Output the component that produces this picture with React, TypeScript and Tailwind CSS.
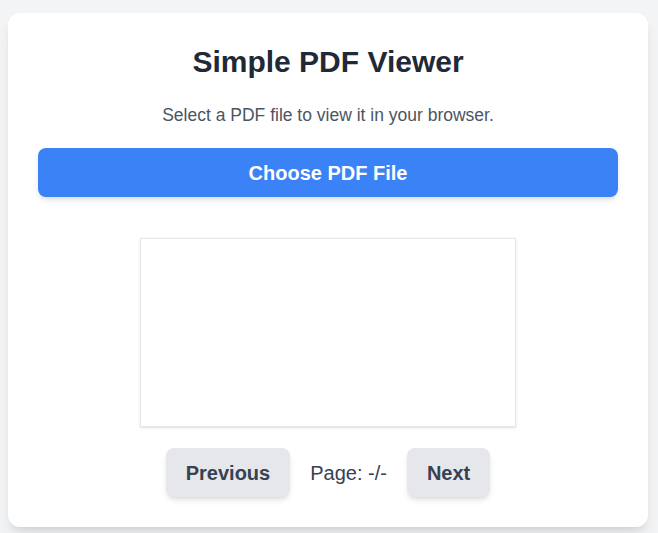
import React from "react";

export default function App() {
  return (
    <div className="min-h-screen bg-[#f3f4f6] pl-[8px] pr-[10px] pt-[13px] pb-[6px]" style={{ fontFamily: '"Liberation Sans", Arial, sans-serif' }}>
      <div className="bg-white rounded-xl shadow-lg px-[30px] pt-[30px] pb-[30px] flex flex-col items-center">
        <h1 className="text-[30px] leading-[38px] font-bold text-[#1f2937]">Simple PDF Viewer</h1>
        <p className="mt-[21px] text-[17.5px] leading-[26px] text-[#4b5563]">Select a PDF file to view it in your browser.</p>
        <button className="mt-[20px] w-full h-[49px] rounded-lg bg-[#3b82f6] text-white text-[20px] font-bold shadow-md">Choose PDF File</button>
        <div className="mt-[41px] w-[376px] h-[189px] border border-[#e5e7eb] shadow-sm bg-white"></div>
        <div className="mt-[21px] flex items-center gap-[20px]">
          <button className="h-[49px] px-[20px] rounded-lg bg-[#e5e7eb] text-[#374151] text-[20px] font-bold shadow-md">Previous</button>
          <span className="text-[20px] text-[#374151]">Page: -/-</span>
          <button className="h-[49px] px-[20px] rounded-lg bg-[#e5e7eb] text-[#374151] text-[20px] font-bold shadow-md">Next</button>
        </div>
      </div>
    </div>
  );
}
